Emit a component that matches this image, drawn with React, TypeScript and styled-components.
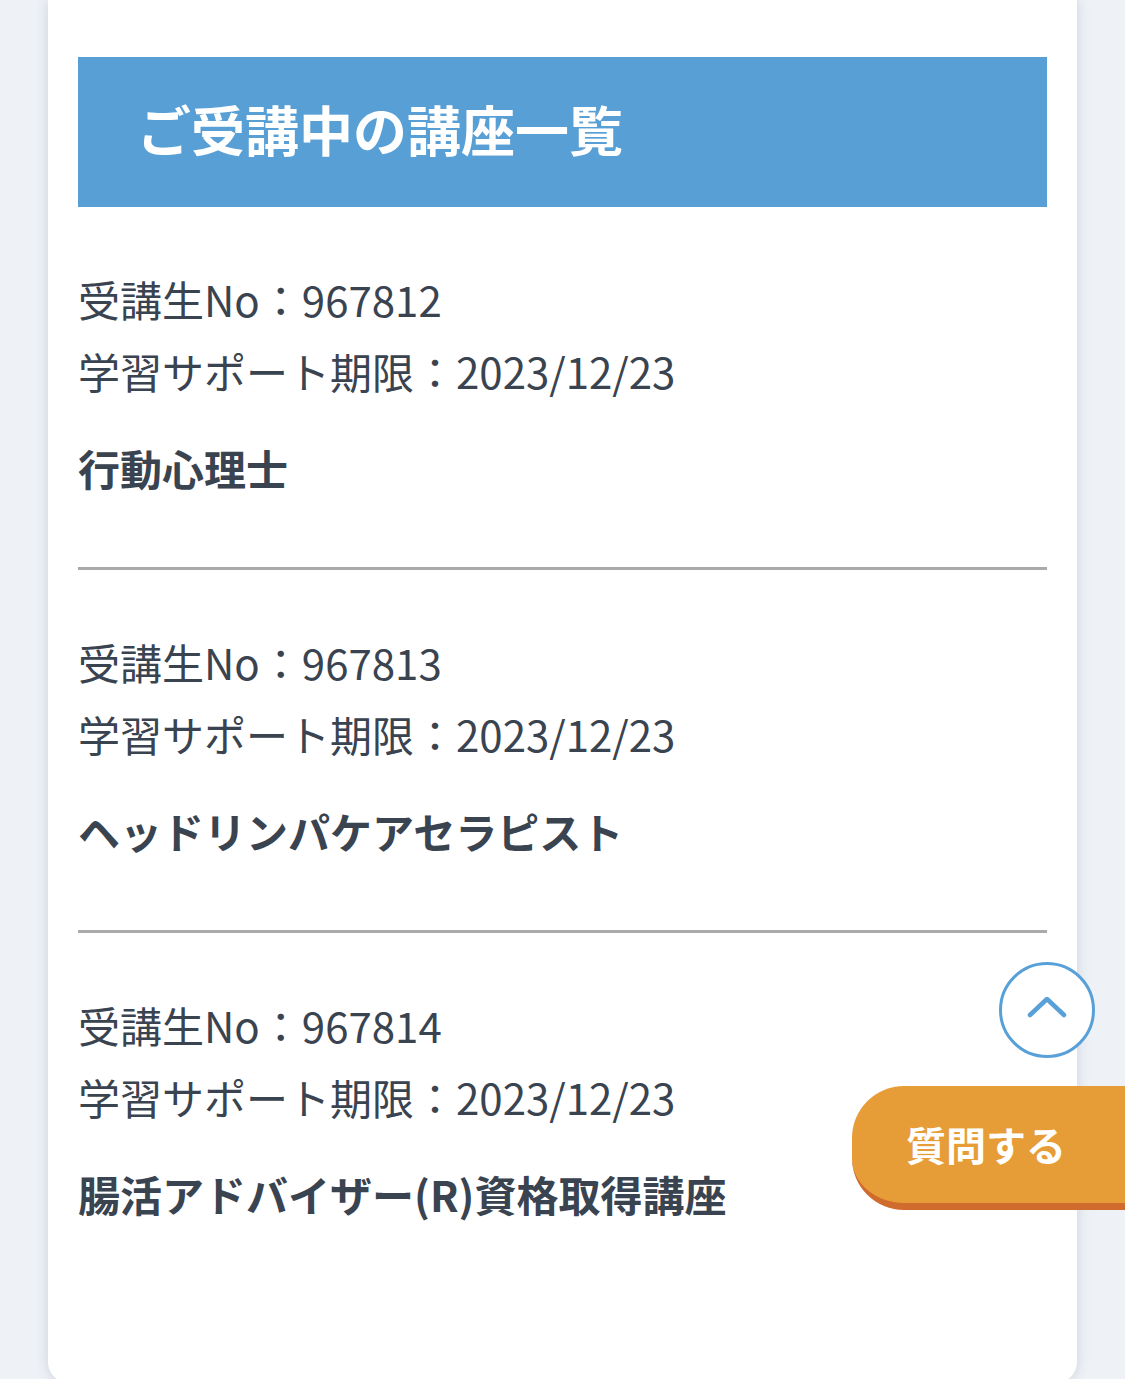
import React from 'react';
import styled, { createGlobalStyle } from 'styled-components';

type Course = {
  no: string;
  limit: string;
  name: string;
}

const courses: Course[] = [
  { no: '967812', limit: '2023/12/23', name: '行動心理士' },
  { no: '967813', limit: '2023/12/23', name: 'ヘッドリンパケアセラピスト' },
  { no: '967814', limit: '2023/12/23', name: '腸活アドバイザー(R)資格取得講座' },
];

const App: React.FC = () => {
  return(
    <>
    <GlobalStyle />
      <Page>
        <Card>
          <TitleBar>ご受講中の講座一覧</TitleBar>
          {courses.map((c, i) => (
            <CourseItem key={c.no} last={i === courses.length - 1}>
              <InfoLine>受講生No：{c.no}</InfoLine>
              <InfoLine>学習サポート期限：{c.limit}</InfoLine>
              <CourseName>{c.name}</CourseName>
            </CourseItem>
          ))}
        </Card>
      </Page>
      <ScrollTopButton aria-label="ページトップへ">
        <svg width="40" height="24" viewBox="0 0 40 24" fill="none">
          <path d="M3 20 L20 4 L37 20" stroke="#58a0d8" strokeWidth="4.5" strokeLinecap="round" strokeLinejoin="round" />
        </svg>
      </ScrollTopButton>
      <QuestionButton>質問する</QuestionButton>
    </>
  );
}

export default App;

const GlobalStyle = createGlobalStyle`
  body {
    margin: 0;
    background-color: #eef2f7;
    font-family: "Noto Sans CJK JP", "Noto Sans", sans-serif;
    color: #3a4350;
  }
`

const Page = styled.div`
  padding: 0 48px;
`

const Card = styled.div`
  box-sizing: border-box;
  width: 1029px;
  min-height: 1383px;
  padding: 57px 30px 0;
  background-color: #fff;
  border-radius: 0 0 21px 21px;
  box-shadow: 0 0 14px rgba(40, 50, 70, 0.16);
`

const TitleBar = styled.h1`
  box-sizing: border-box;
  margin: 0;
  height: 150px;
  display: flex;
  align-items: center;
  padding: 0 0 8px 59px;
  background-color: #589fd5;
  color: #fff;
  font-size: 54px;
  font-weight: 700;
  letter-spacing: 0;
`

const CourseItem = styled.div<{ last: boolean }>`
  padding: 56px 0 63px;
  border-bottom: ${({ last }) => (last ? 'none' : '3px solid #aaaaaa')};
`

const InfoLine = styled.p`
  margin: 0;
  font-size: 42px;
  line-height: 72px;
  font-weight: 400;
`

const CourseName = styled.p`
  margin: 25px 0 0;
  font-size: 42px;
  line-height: 72px;
  font-weight: 700;
`

const ScrollTopButton = styled.button`
  position: fixed;
  left: 999px;
  top: 962px;
  width: 96px;
  height: 96px;
  box-sizing: border-box;
  padding: 0 0 6px;
  border: 3px solid #58a0d8;
  border-radius: 50%;
  background-color: #fff;
  display: flex;
  align-items: center;
  justify-content: center;
`

const QuestionButton = styled.button`
  position: fixed;
  left: 852px;
  top: 1086px;
  width: 273px;
  height: 124px;
  box-sizing: border-box;
  padding: 0 0 2px 54px;
  border: none;
  border-bottom: 7px solid #cf6b2d;
  border-radius: 52px 0 0 52px;
  background-color: #e79d37;
  color: #fff;
  font-family: "Noto Sans CJK JP", sans-serif;
  font-size: 40px;
  font-weight: 700;
  text-align: left;
  letter-spacing: 0;
`
